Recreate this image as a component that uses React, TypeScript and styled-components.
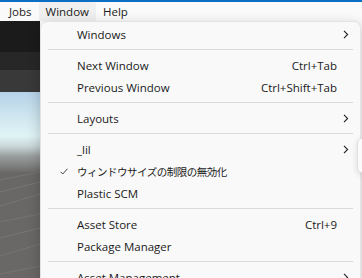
import React from "react";
import styled, { createGlobalStyle } from "styled-components";

const Global = createGlobalStyle`
  html, body { margin: 0; padding: 0; }
  body { width: 362px; height: 278px; overflow: hidden; background: #fafafa; }
`;

const UI_FONT = `"Segoe UI", "Open Sans", "Noto Sans", sans-serif`;

const Page = styled.div`
  position: relative;
  width: 362px;
  height: 278px;
  overflow: hidden;
  display: flex;
  flex-direction: column;
  font-family: ${UI_FONT};
`;

const AccentStrip = styled.div`
  height: 2px;
  background: #0b6fc6;
  flex: none;
`;

const MenuBar = styled.div`
  height: 19px;
  flex: none;
  display: flex;
  align-items: stretch;
  padding-left: 2px;
  background: #fafafa;
`;

const BarItem = styled.div<{ $active?: boolean }>`
  display: flex;
  align-items: center;
  padding: 0 7px;
  font-size: 11.5px;
  color: #1b1b1b;
  background: ${(p) => (p.$active ? "#f0f0f0" : "transparent")};
  border-radius: 3px 3px 0 0;
`;

const Workspace = styled.div`
  flex: 1;
  display: flex;
  flex-direction: column;
  width: 40px;
`;

const Strip = styled.div<{ $h: number; $c: string }>`
  height: ${(p) => p.$h}px;
  background: ${(p) => p.$c};
  flex: none;
`;

const Sky = styled.div`
  height: 80px;
  flex: none;
  background: linear-gradient(
    to bottom,
    #b6d2e8 0%,
    #cfe6f0 30%,
    #e0f4f6 55%,
    #c9d6d8 68%,
    #9a9e9f 80%,
    #6e6c6b 100%
  );
`;

const Ground = styled.div`
  flex: 1;
  background: #6a6866;
  overflow: hidden;
`;

const GroundLines = styled.svg`
  display: block;
  width: 40px;
  height: 110px;
`;

const Menu = styled.div`
  position: absolute;
  left: 40px;
  top: 21px;
  width: 321px;
  height: 270px;
  background: #f9f9f9;
  border: 1px solid #e3e3e3;
  border-radius: 7px;
  box-shadow: 0 4px 14px rgba(0, 0, 0, 0.22);
  box-sizing: border-box;
  padding-top: 1px;
  display: flex;
  flex-direction: column;
`;

const Item = styled.div`
  height: 22px;
  flex: none;
  display: grid;
  grid-template-columns: 36px 1fr auto 23px;
  align-items: center;
  font-size: 11.5px;
  color: #1a1a1a;
`;

const Check = styled.div`
  display: flex;
  justify-content: flex-end;
  padding-right: 9px;
`;

const Label = styled.span`
  white-space: nowrap;
`;

const JpLabel = styled.span`
  white-space: nowrap;
  font-family: "Noto Sans CJK JP", sans-serif;
  font-size: 10.5px;
  letter-spacing: -0.5px;
`;

const Shortcut = styled.span`
  white-space: nowrap;
  text-align: right;
`;

const Arrow = styled.div`
  display: flex;
  justify-content: flex-start;
  padding-left: 6px;
`;

const Separator = styled.div`
  height: 9px;
  flex: none;
  display: flex;
  align-items: center;
  padding: 0 7px;
  &::after {
    content: "";
    flex: 1;
    height: 1px;
    background: #d9d9d9;
  }
`;

const SubMenuEdge = styled.div`
  position: absolute;
  left: 357px;
  top: 138px;
  width: 30px;
  height: 33px;
  background: #fbfbfb;
  border: 1px solid #e0e0e0;
  border-radius: 5px;
  box-shadow: 0 2px 6px rgba(0, 0, 0, 0.12);
`;

const Chevron = () => (
  <svg width="6" height="9" viewBox="0 0 6 9">
    <path d="M1 0.8 L4.6 4.5 L1 8.2" fill="none" stroke="#222" strokeWidth="1.1" />
  </svg>
);

const Tick = () => (
  <svg width="8" height="7" viewBox="0 0 8 7">
    <path d="M0.6 3.8 L2.8 6 L7.4 0.8" fill="none" stroke="#333" strokeWidth="0.9" />
  </svg>
);

type Row =
  | { sep: true }
  | { label: string; shortcut?: string; sub?: boolean; checked?: boolean; jp?: boolean };

const rows: Row[] = [
  { label: "Windows", sub: true },
  { sep: true },
  { label: "Next Window", shortcut: "Ctrl+Tab" },
  { label: "Previous Window", shortcut: "Ctrl+Shift+Tab" },
  { sep: true },
  { label: "Layouts", sub: true },
  { sep: true },
  { label: "_lil", sub: true },
  { label: "ウィンドウサイズの制限の無効化", checked: true, jp: true },
  { label: "Plastic SCM" },
  { sep: true },
  { label: "Asset Store", shortcut: "Ctrl+9" },
  { label: "Package Manager" },
  { sep: true },
  { label: "Asset Management", sub: true },
];

export default function App() {
  return (
    <Page>
      <Global />
      <AccentStrip />
      <MenuBar>
        <BarItem>Jobs</BarItem>
        <BarItem $active>Window</BarItem>
        <BarItem>Help</BarItem>
      </MenuBar>
      <Workspace>
        <Strip $h={31} $c="#1b1b1b" />
        <Strip $h={18} $c="#272727" />
        <Strip $h={22} $c="#393939" />
        <Sky />
        <Ground>
          <GroundLines viewBox="0 0 40 110">
            {[8, 20, 34, 50, 66, 84, 102, 120].map((y, i) => (
              <line key={i} x1="0" y1={y} x2="40" y2={y - 8 - (i % 3) * 2} stroke="#7b7876" strokeWidth="0.8" />
            ))}
          </GroundLines>
        </Ground>
      </Workspace>
      <Menu>
        {rows.map((r, i) =>
          "sep" in r ? (
            <Separator key={i} />
          ) : (
            <Item key={i}>
              <Check>{r.checked ? <Tick /> : null}</Check>
              {r.jp ? <JpLabel>{r.label}</JpLabel> : <Label>{r.label}</Label>}
              <Shortcut>{r.shortcut ?? ""}</Shortcut>
              <Arrow>{r.sub ? <Chevron /> : null}</Arrow>
            </Item>
          )
        )}
      </Menu>
      <SubMenuEdge />
    </Page>
  );
}
